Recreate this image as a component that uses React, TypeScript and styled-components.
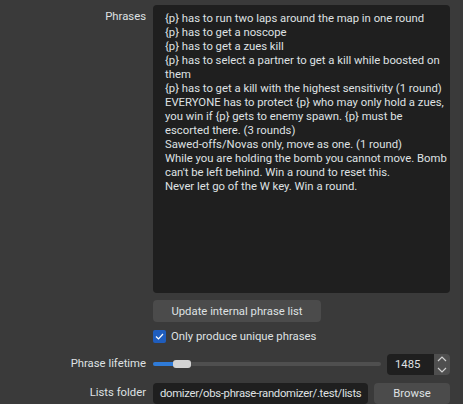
import React from "react";
import styled, { createGlobalStyle } from "styled-components";

const Global = createGlobalStyle`
  html, body { margin: 0; padding: 0; background: #3a3a3a; overflow: hidden; }
  body { font-family: Roboto, "Noto Sans", sans-serif; font-size: 11.3px; color: #dfe1e3; }
`;

const Page = styled.div`
  width: 463px;
  height: 404px;
  box-sizing: border-box;
  padding: 5px 13px 0 0;
  background: #3a3a3a;
  display: grid;
  grid-template-columns: 146px 297px;
  column-gap: 7px;
  align-items: center;
  overflow: hidden;
`;

const Label = styled.div<{ $top?: boolean; $mt?: number }>`
  text-align: right;
  line-height: 14px;
  align-self: ${(p) => (p.$top ? "start" : "center")};
  padding-top: ${(p) => (p.$top ? "5px" : "0")};
  margin-top: ${(p) => p.$mt ?? 0}px;
`;

const Field = styled.div<{ $mt?: number }>`
  grid-column: 2;
  margin-top: ${(p) => p.$mt ?? 0}px;
  min-width: 0;
`;

const PhraseBox = styled.div`
  height: 288px;
  box-sizing: border-box;
  background: #1f1f1f;
  border-radius: 4px;
  padding: 7px 0 0 12px;
  line-height: 14px;
  overflow: hidden;
`;

const Line = styled.div`
  white-space: nowrap;
`;

const Button = styled.button<{ $w: number; $h: number }>`
  width: ${(p) => p.$w}px;
  height: ${(p) => p.$h}px;
  border: none;
  border-radius: 4px;
  background: #4b4b4b;
  color: #dfe1e3;
  font: inherit;
  padding: 0;
  display: flex;
  align-items: center;
  justify-content: center;
  flex-shrink: 0;
`;

const CheckRow = styled.label`
  display: flex;
  align-items: center;
  gap: 5px;
  height: 14px;
`;

const Check = styled.span`
  width: 13px;
  height: 13px;
  border-radius: 2px;
  background: #1f5dbd;
  display: flex;
  align-items: center;
  justify-content: center;
`;

const SliderRow = styled.div`
  display: flex;
  align-items: center;
  gap: 6px;
`;

const Track = styled.div`
  position: relative;
  flex: 1;
  height: 4px;
  border-radius: 2px;
  background: #4f4f4f;
`;

const Fill = styled.div`
  height: 100%;
  border-radius: 2px;
  background: #2f7bd8;
`;

const Handle = styled.div`
  position: absolute;
  top: -2px;
  width: 18px;
  height: 8px;
  border-radius: 3px;
  background: #d4d4d4;
`;

const Spin = styled.div`
  width: 63px;
  height: 21px;
  display: flex;
  border-radius: 4px;
  overflow: hidden;
  flex-shrink: 0;
`;

const SpinValue = styled.div`
  flex: 1;
  background: #1f1f1f;
  padding-left: 8px;
  display: flex;
  align-items: center;
`;

const SpinArrows = styled.div`
  width: 16px;
  background: #4f4f4f;
  display: flex;
  flex-direction: column;
  align-items: center;
  justify-content: space-around;
`;

const FolderRow = styled.div`
  display: flex;
  gap: 6px;
  height: 21px;
`;

const Input = styled.div`
  flex: 1;
  min-width: 0;
  background: #1f1f1f;
  border-radius: 4px;
  padding: 0 4px 0 7px;
  display: flex;
  align-items: center;
  overflow: hidden;
  white-space: nowrap;
  letter-spacing: -0.3px;
`;

const lines = [
  "{p} has to run two laps around the map in one round",
  "{p} has to get a noscope",
  "{p} has to get a zues kill",
  "{p} has to select a partner to get a kill while boosted on",
  "them",
  "{p} has to get a kill with the highest sensitivity (1 round)",
  "EVERYONE has to protect {p} who may only hold a zues,",
  "you win if {p} gets to enemy spawn. {p} must be",
  "escorted there. (3 rounds)",
  "Sawed-offs/Novas only, move as one. (1 round)",
  "While you are holding the bomb you cannot move. Bomb",
  "can't be left behind. Win a round to reset this.",
  "Never let go of the W key. Win a round.",
];

export default function App() {
  const ratio = 20 / 210;
  return (
    <>
      <Global />
      <Page>
        <Label $top>Phrases</Label>
        <PhraseBox>
          {lines.map((l, i) => (
            <Line key={i}>{l}</Line>
          ))}
        </PhraseBox>
        <Field $mt={6}>
          <Button $w={168} $h={22}>Update internal phrase list</Button>
        </Field>
        <Field $mt={7}>
          <CheckRow>
            <Check>
              <svg width="9" height="7" viewBox="0 0 9 7">
                <path d="M1 3.5 L3.5 6 L8 1" stroke="#fff" strokeWidth="1.2" fill="none" />
              </svg>
            </Check>
            Only produce unique phrases
          </CheckRow>
        </Field>
        <Label $mt={9}>Phrase lifetime</Label>
        <Field $mt={9}>
          <SliderRow>
            <Track>
              <Fill style={{ width: `${ratio * 210 + 4}px` }} />
              <Handle style={{ left: `${ratio * 210}px` }} />
            </Track>
            <Spin>
              <SpinValue>1485</SpinValue>
              <SpinArrows>
                <svg width="10" height="6" viewBox="0 0 10 6">
                  <path d="M1 5 L5 1 L9 5" stroke="#cfcfcf" strokeWidth="1.2" fill="none" />
                </svg>
                <svg width="10" height="6" viewBox="0 0 10 6">
                  <path d="M1 1 L5 5 L9 1" stroke="#cfcfcf" strokeWidth="1.2" fill="none" />
                </svg>
              </SpinArrows>
            </Spin>
          </SliderRow>
        </Field>
        <Label $mt={7}>Lists folder</Label>
        <Field $mt={7}>
          <FolderRow>
            <Input>domizer/obs-phrase-randomizer/.test/lists</Input>
            <Button $w={76} $h={21}>Browse</Button>
          </FolderRow>
        </Field>
      </Page>
    </>
  );
}
